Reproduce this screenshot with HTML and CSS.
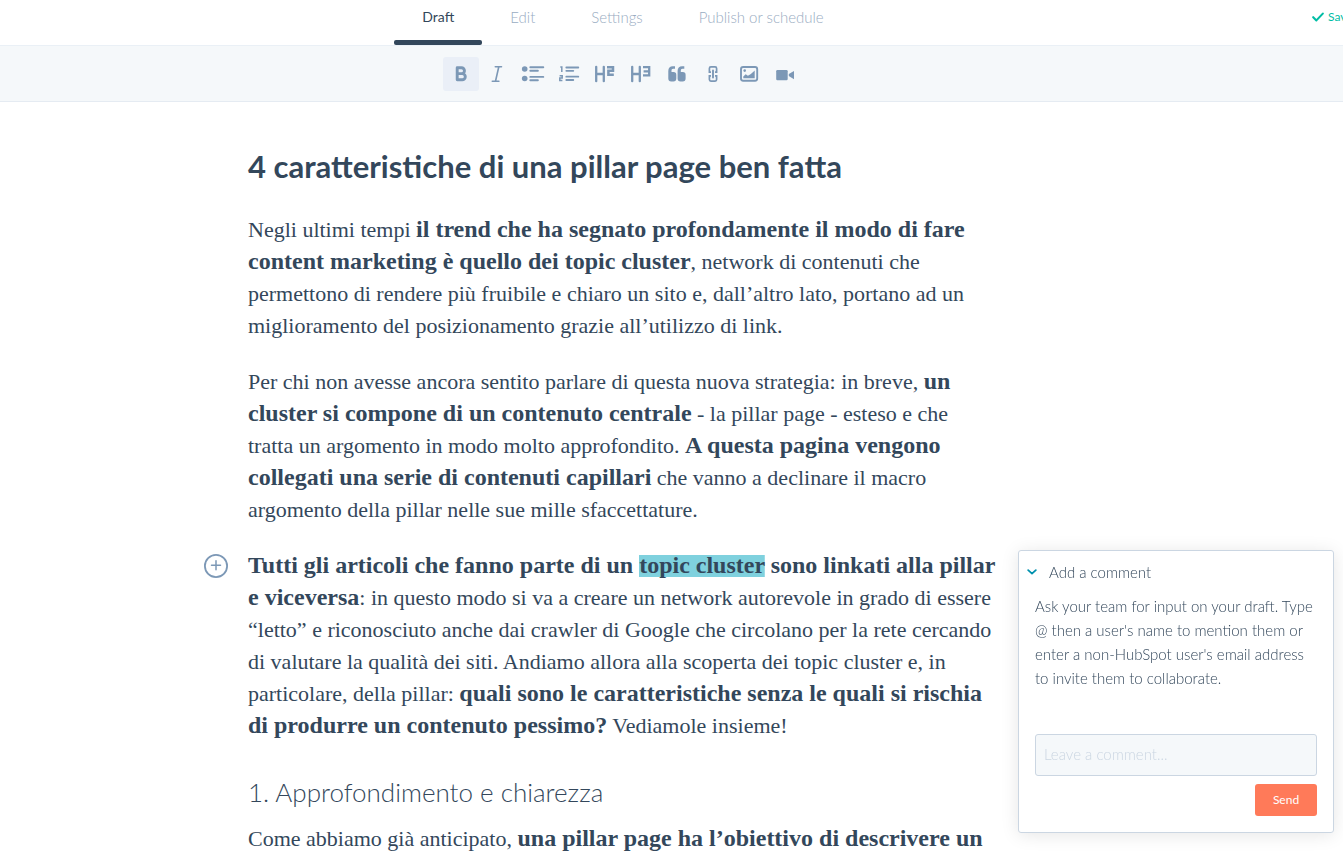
FILE: index.html
```html
<!DOCTYPE html>
<html lang="it">
<head>
<meta charset="utf-8">
<title>4 caratteristiche di una pillar page ben fatta</title>
<link rel="stylesheet" href="styles.css">
</head>
<body>
<header class="topbar">
  <nav class="tabs">
    <a class="tab tab-active" href="#draft">Draft</a>
    <a class="tab" href="#edit">Edit</a>
    <a class="tab" href="#settings">Settings</a>
    <a class="tab" href="#publish">Publish or schedule</a>
  </nav>
  <div class="status">
    <svg class="status-icon" viewBox="0 0 12 10"><path d="M1.2 5.2 4.4 8.400 10.800 1.600" fill="none" stroke="currentColor" stroke-width="2.100" stroke-linecap="round" stroke-linejoin="round"/></svg>
    <span>Saved</span>
  </div>
</header>

<div class="toolbar" role="toolbar">
  <button class="tool tool-active" type="button" aria-label="Bold"><svg class="icon" viewBox="0 0 24 24"><path d="M8.200 5.700h4.300a2.900 2.900 0 0 1 0 5.900H8.200zM8.200 11.600h5a3.100 3.100 0 0 1 0 6.200h-5z" fill="none" stroke="currentColor" stroke-width="2.900" stroke-linejoin="round"/></svg></button>
  <button class="tool" type="button" aria-label="Italic"><svg class="icon" viewBox="0 0 24 24"><path d="M10.300 4.800h6.200M7.300 19.200h6.600M13.800 4.800 10.500 19.200" fill="none" stroke="currentColor" stroke-width="1.600" stroke-linecap="round"/></svg></button>
  <button class="tool" type="button" aria-label="Bulleted list"><svg class="icon" viewBox="0 0 24 24"><circle cx="3.700" cy="7" r="2.800" fill="currentColor"/><circle cx="3.700" cy="16.500" r="2.800" fill="currentColor"/><path d="M9.300 5.200h13M9.300 8.700h7.600M9.300 14.900h13M9.300 18.300h7.600" fill="none" stroke="currentColor" stroke-width="1.900" stroke-linecap="round"/></svg></button>
  <button class="tool" type="button" aria-label="Numbered list"><svg class="icon" viewBox="0 0 24 24"><path d="M3.300 5h1.500v5M2.600 13.700h2.600v2.200H2.800v2.600h2.600" fill="none" stroke="currentColor" stroke-width="1.500"/><path d="M9.300 5.500h12M9.300 8.800h7M9.300 14.700h12M9.300 18h7" fill="none" stroke="currentColor" stroke-width="1.800" stroke-linecap="round"/></svg></button>
  <button class="tool" type="button" aria-label="Heading 2"><svg class="icon" viewBox="0 0 24 24"><path d="M3.200 4.800v14.400M10.800 4.800v14.400M3.200 12h7.600" fill="none" stroke="currentColor" stroke-width="2.300" stroke-linecap="round"/><path d="M14 5.200h6v3.600h-4.600v4h5.400" fill="none" stroke="currentColor" stroke-width="2.500"/></svg></button>
  <button class="tool" type="button" aria-label="Heading 3"><svg class="icon" viewBox="0 0 24 24"><path d="M3.200 4.800v14.400M10.800 4.800v14.400M3.200 12h7.600" fill="none" stroke="currentColor" stroke-width="2.300" stroke-linecap="round"/><path d="M14 5.200h6.200v8.200H14M14.600 9.300h5" fill="none" stroke="currentColor" stroke-width="2.300"/></svg></button>
  <button class="tool" type="button" aria-label="Quote"><svg class="icon" viewBox="0 0 24 24"><path id="quote" d="M10 4.200v2.500H8.200c-1.300 0-1.700.9-1.700 2v1.200h2c1.900 0 2.800 1 2.800 2.800v3.900c0 1.900-1 3-2.900 3H6.200c-1.900 0-2.900-1.100-2.900-3V8.900c0-3 1.600-4.700 4.500-4.700z" fill="currentColor"/><use href="#quote" x="9.300"/></svg></button>
  <button class="tool" type="button" aria-label="Link"><svg class="icon" viewBox="0 0 24 24"><path d="M10 10.200H8.400V6.400c0-1 .5-1.500 1.500-1.500h4.200c1 0 1.500.5 1.500 1.500v3.800H14M10 13.800H8.400v3.800c0 1 .5 1.500 1.500 1.500h4.200c1 0 1.500-.5 1.500-1.500v-3.800H14" fill="none" stroke="currentColor" stroke-width="1.700"/><path d="M12 8.500v7" stroke="currentColor" stroke-width="1.900" stroke-linecap="round"/></svg></button>
  <button class="tool" type="button" aria-label="Image"><svg class="icon" viewBox="0 0 24 24"><rect x="4" y="5" width="16.200" height="13.800" rx="2.200" fill="none" stroke="currentColor" stroke-width="1.900"/><circle cx="7.700" cy="8.600" r="1.300" fill="currentColor"/><path d="M6.300 16.300v-1.800l2.400-2.300 2.200 1.600 3-1.800 3.800-3.600v7.900z" fill="currentColor"/></svg></button>
  <button class="tool" type="button" aria-label="Video"><svg class="icon" viewBox="0 0 24 24"><rect x="3.200" y="8" width="11.500" height="10.200" rx="1.200" fill="currentColor"/><path d="M21 9v8.200l-5.200-3.100v-2z" fill="currentColor"/></svg></button>
</div>

<main class="editor">
  <article class="post">
    <h1 class="title">4 caratteristiche di una pillar page ben fatta</h1>
    <p class="para">Negli ultimi tempi <b>il trend che ha segnato profondamente il modo di fare<br>content marketing è quello dei topic cluster</b>, network di contenuti che<br>permettono di rendere più fruibile e chiaro un sito e, dall’altro lato, portano ad un<br>miglioramento del posizionamento grazie all’utilizzo di link.</p>
    <p class="para">Per chi non avesse ancora sentito parlare di questa nuova strategia: in breve, <b>un<br>cluster si compone di un contenuto centrale</b> - la pillar page - esteso e che<br>tratta un argomento in modo molto approfondito. <b>A questa pagina vengono<br>collegati una serie di contenuti capillari</b> che vanno a declinare il macro<br>argomento della pillar nelle sue mille sfaccettature.</p>
    <div class="block">
      <button class="add" type="button" aria-label="Add"><svg class="add-icon" viewBox="0 0 24 24"><circle cx="12" cy="12" r="11.100" fill="none" stroke="currentColor" stroke-width="1.800"/><path d="M12 6.800v9M7.500 11.300h9" stroke="currentColor" stroke-width="1.500" stroke-linecap="round"/></svg></button>
      <p class="para"><b>Tutti gli articoli che fanno parte di un <mark class="marked">topic cluster</mark> sono linkati alla pillar<br>e viceversa</b>: in questo modo si va a creare un network autorevole in grado di essere<br>“letto” e riconosciuto anche dai crawler di Google che circolano per la rete cercando<br>di valutare la qualità dei siti. Andiamo allora alla scoperta dei topic cluster e, in<br>particolare, della pillar: <b>quali sono le caratteristiche senza le quali si rischia<br>di produrre un contenuto pessimo?</b> Vediamole insieme!</p>
    </div>
    <h2 class="subtitle">1. Approfondimento e chiarezza</h2>
    <p class="para">Come abbiamo già anticipato, <b>una pillar page ha l’obiettivo di descrivere un</b></p>
  </article>
</main>

<aside class="comment">
  <button class="comment-toggle" type="button"><svg class="chevron" viewBox="0 0 10 6"><path d="M1.200 1.200 5 4.600 8.800 1.200" fill="none" stroke="currentColor" stroke-width="1.800" stroke-linecap="round" stroke-linejoin="round"/></svg><span>Add a comment</span></button>
  <p class="comment-help">Ask your team for input on your draft. Type<br>@ then a user's name to mention them or<br>enter a non-HubSpot user's email address<br>to invite them to collaborate.</p>
  <form class="comment-form">
    <input class="comment-input" type="text" placeholder="Leave a comment..." aria-label="Leave a comment">
    <button class="send" type="button">Send</button>
  </form>
</aside>
</body>
</html>
```
FILE: styles.css
```css
* { box-sizing: border-box; }

body {
  margin: 0;
  height: 100vh;
  overflow: hidden;
  background: #fff;
  color: #33475b;
  font-family: Lato, "Open Sans", sans-serif;
  font-size: 15px;
  font-weight: 300;
}

button { font: inherit; border: 0; padding: 0; background: none; cursor: pointer; }

.topbar {
  display: flex;
  height: 46px;
  border-bottom: 1px solid #eaf0f6;
}

.tabs {
  flex: 1;
  display: flex;
  justify-content: center;
}

.tab {
  height: 45px;
  padding: 6px 28px 0;
  color: #99acc2;
  line-height: 22px;
  text-decoration: none;
  white-space: nowrap;
}

.tab-active {
  position: relative;
  color: #33475b;
  font-size: 14px;
  font-weight: 400;
}

.tab-active::after {
  content: "";
  position: absolute;
  left: 0;
  right: 0;
  bottom: 0;
  height: 5px;
  border-radius: 2px;
  background: #33475b;
}

.status {
  flex: 0 0 97px;
  display: flex;
  align-items: flex-start;
  gap: 4px;
  padding: 6px 0 0 66px;
  overflow: hidden;
  color: #00bda5;
  font-size: 12px;
  font-weight: 400;
  line-height: 22px;
}

.status-icon { flex: none; width: 12px; height: 10px; margin-top: 6px; }

.toolbar {
  display: flex;
  justify-content: center;
  align-items: center;
  height: 56px;
  padding-right: 97px;
  background: #f5f8fa;
  border-bottom: 1px solid #e5ebf2;
}

.tool {
  display: grid;
  place-items: center;
  width: 36px;
  height: 34px;
  border-radius: 3px;
  color: #7c98b6;
}

.tool-active { background: #eaeff7; }

.icon { width: 24px; height: 24px; }

.editor {
  display: flex;
  justify-content: center;
  padding: 44px 97px 0 0;
}

.post { width: 750px; }

.title {
  margin: 0 0 28px;
  font-size: 31px;
  font-weight: 700;
  line-height: 40px;
  white-space: nowrap;
}

.para {
  margin: 0 0 24px;
  font-family: Georgia, "Liberation Serif", serif;
  font-size: 22px;
  font-weight: 400;
  line-height: 32px;
  white-space: nowrap;
}

.para b { font-size: 24px; line-height: 20px; }

.marked {
  background: linear-gradient(#7fd1de, #7fd1de) center 3px / 100% 22px no-repeat;
  color: inherit;
}

.block { position: relative; }

.add {
  position: absolute;
  left: -44px;
  top: 4px;
  width: 24px;
  height: 24px;
  color: #7c98b6;
}

.add-icon { display: block; width: 24px; height: 24px; }

.subtitle {
  margin: 34px 0 15px;
  font-size: 26px;
  font-weight: 300;
  line-height: 32px;
}

.comment {
  position: fixed;
  right: 9px;
  bottom: 22px;
  width: 316px;
  padding: 9px 16px 16px;
  background: #fff;
  border: 1px solid #cbd6e2;
  border-radius: 3px;
  box-shadow: 0 2px 18px rgba(0, 0, 0, 0.1);
}

.comment-toggle {
  display: flex;
  align-items: center;
  gap: 12px;
  margin: 0 0 10px -8px;
  color: #33475b;
  line-height: 24px;
}

.chevron { width: 10px; height: 6px; color: #0091ae; }

.comment-help {
  margin: 0 0 44px;
  line-height: 24px;
  white-space: nowrap;
}

.comment-form {
  display: flex;
  flex-direction: column;
  align-items: flex-end;
  gap: 8px;
}

.comment-input {
  width: 100%;
  height: 42px;
  padding: 0 8px 2px;
  border: 1px solid #cbd6e2;
  border-radius: 3px;
  background: #f5f8fa;
  color: #33475b;
  font: inherit;
}

.comment-input::placeholder { color: #cbd6e2; }

.send {
  width: 62px;
  height: 32px;
  padding-bottom: 2px;
  border-radius: 3px;
  background: #ff7a59;
  color: #fff;
  font-size: 12px;
  font-weight: 400;
}
```
